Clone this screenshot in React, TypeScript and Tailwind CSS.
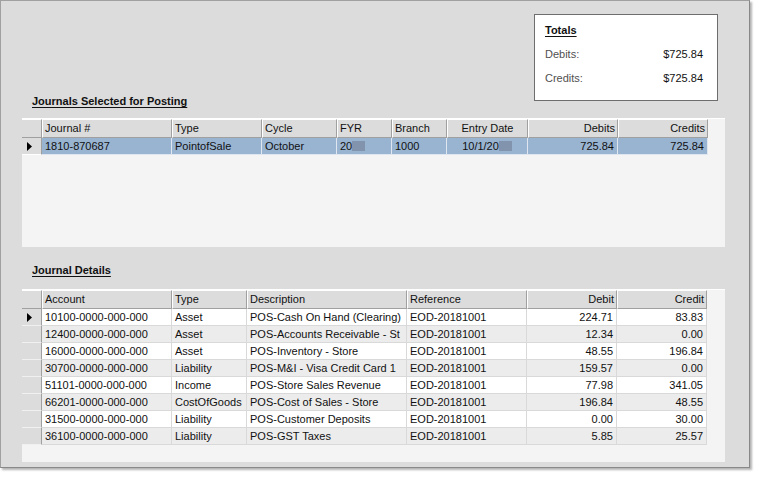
import React from "react";

type Col = { label: string; w: number; align?: "left" | "center" | "right" };

const alignCls = {
  left: "justify-start",
  center: "justify-center",
  right: "justify-end",
};

const journalCols: Col[] = [
  { label: "Journal #", w: 130 },
  { label: "Type", w: 90 },
  { label: "Cycle", w: 75 },
  { label: "FYR", w: 55 },
  { label: "Branch", w: 55 },
  { label: "Entry Date", w: 81, align: "center" },
  { label: "Debits", w: 90, align: "right" },
  { label: "Credits", w: 90, align: "right" },
];

const detailCols: Col[] = [
  { label: "Account", w: 130 },
  { label: "Type", w: 75 },
  { label: "Description", w: 160 },
  { label: "Reference", w: 120 },
  { label: "Debit", w: 90, align: "right" },
  { label: "Credit", w: 90, align: "right" },
];

const details = [
  ["10100-0000-000-000", "Asset", "POS-Cash On Hand (Clearing)", "EOD-20181001", "224.71", "83.83"],
  ["12400-0000-000-000", "Asset", "POS-Accounts Receivable - St", "EOD-20181001", "12.34", "0.00"],
  ["16000-0000-000-000", "Asset", "POS-Inventory - Store", "EOD-20181001", "48.55", "196.84"],
  ["30700-0000-000-000", "Liability", "POS-M&I - Visa Credit Card 1", "EOD-20181001", "159.57", "0.00"],
  ["51101-0000-000-000", "Income", "POS-Store Sales Revenue", "EOD-20181001", "77.98", "341.05"],
  ["66201-0000-000-000", "CostOfGoods", "POS-Cost of Sales - Store", "EOD-20181001", "196.84", "48.55"],
  ["31500-0000-000-000", "Liability", "POS-Customer Deposits", "EOD-20181001", "0.00", "30.00"],
  ["36100-0000-000-000", "Liability", "POS-GST Taxes", "EOD-20181001", "5.85", "25.57"],
];

function Arrow() {
  return (
    <svg width="5" height="9" viewBox="0 0 5 9">
      <path d="M0 0 L5 4.5 L0 9 Z" fill="#000" />
    </svg>
  );
}

function HeaderRow({ cols }: { cols: Col[] }) {
  return (
    <div className="flex h-[19px]">
      <div className="w-[20px] shrink-0 border-t border-r border-b border-t-white border-r-[#a0a0a0] border-b-[#a0a0a0] bg-[#dcdcdc]" />
      {cols.map((c) => (
        <div
          key={c.label}
          style={{ width: c.w }}
          className={`flex shrink-0 items-center border-t border-l border-r border-b border-t-white border-l-white border-r-[#a0a0a0] border-b-[#a0a0a0] bg-[#dcdcdc] px-[2px] ${alignCls[c.align ?? "left"]}`}
        >
          <span className="whitespace-nowrap leading-[13px]">{c.label}</span>
        </div>
      ))}
    </div>
  );
}

function Redact() {
  return <span className="inline-block h-[10px] w-[13px] bg-[#8294ad] align-[-1px]" />;
}

function JournalsGrid() {
  const cells: React.ReactNode[] = [
    "1810-870687",
    "PointofSale",
    "October",
    <>20<Redact /></>,
    "1000",
    <>10/1/20<Redact /></>,
    "725.84",
    "725.84",
  ];
  return (
    <div className="h-[129px] w-[703px] border-t border-white bg-[#f4f4f4]">
      <HeaderRow cols={journalCols} />
      <div className="flex h-[17px]">
        <div className="flex w-[20px] shrink-0 items-center border-r border-b border-r-[#a0a0a0] border-b-white bg-[#dcdcdc] pl-[5px]">
          <Arrow />
        </div>
        {journalCols.map((c, i) => (
          <div
            key={c.label}
            style={{ width: c.w }}
            className={`flex shrink-0 items-center overflow-hidden border-r border-b border-r-[#dfe6ef] border-b-[#dfe6ef] bg-[#99b4d1] px-[3px] ${alignCls[c.align ?? "left"]}`}
          >
            <span className="whitespace-nowrap leading-[13px]">{cells[i]}</span>
          </div>
        ))}
      </div>
    </div>
  );
}

function DetailsGrid() {
  return (
    <div className="h-[173px] w-[703px] border-t border-white bg-[#f4f4f4]">
      <HeaderRow cols={detailCols} />
      {details.map((row, r) => (
        <div key={r} className="flex h-[17px]">
          <div className="flex w-[20px] shrink-0 items-center border-r border-b border-r-[#a0a0a0] border-b-[#f0f0f0] bg-[#dcdcdc] pl-[5px]">
            {r === 0 && <Arrow />}
          </div>
          {detailCols.map((c, i) => (
            <div
              key={c.label}
              style={{ width: c.w }}
              className={`flex shrink-0 items-center overflow-hidden border-r border-b border-[#d9d9d9] px-[3px] ${
                r % 2 === 0 ? "bg-white" : "bg-[#ececec]"
              } ${alignCls[c.align ?? "left"]}`}
            >
              <span className="whitespace-nowrap leading-[13px]">{row[i]}</span>
            </div>
          ))}
        </div>
      ))}
    </div>
  );
}

export default function App() {
  return (
    <div className="h-[479px] w-[757px] bg-white font-['Liberation_Sans',Arial,sans-serif] text-[11px] text-[#111]">
      <div className="flex h-[468px] w-[750px] flex-col border-t border-l border-r border-b border-t-[#a0a0a0] border-l-[#a0a0a0] border-r-[#888888] border-b-[#888888] bg-[#dcdcdc] pl-[21px] shadow-[2px_2px_2px_rgba(0,0,0,0.3)]">
        {/* Top: label + totals */}
        <div className="mt-[13px] flex w-[703px] items-start justify-between">
          <h2 className="ml-[10px] mt-[81px] font-bold leading-[13px] underline underline-offset-[2px]">
            Journals Selected for Posting
          </h2>
          <div className="mr-[7px] h-[87px] w-[184px] border border-[#6e6e6e] bg-white pl-[10px] pr-[14px] pt-[9px]">
            <div className="font-bold leading-[13px] underline underline-offset-[2px]">Totals</div>
            <div className="mt-[11px] flex justify-between leading-[13px]">
              <span className="text-[#505050]">Debits:</span>
              <span>$725.84</span>
            </div>
            <div className="mt-[11px] flex justify-between leading-[13px]">
              <span className="text-[#505050]">Credits:</span>
              <span>$725.84</span>
            </div>
          </div>
        </div>

        <div className="mt-[10px]">
          <JournalsGrid />
        </div>

        <h2 className="ml-[10px] mt-[17px] font-bold leading-[13px] underline underline-offset-[2px]">
          Journal Details
        </h2>

        <div className="mt-[12px]">
          <DetailsGrid />
        </div>
      </div>
    </div>
  );
}
